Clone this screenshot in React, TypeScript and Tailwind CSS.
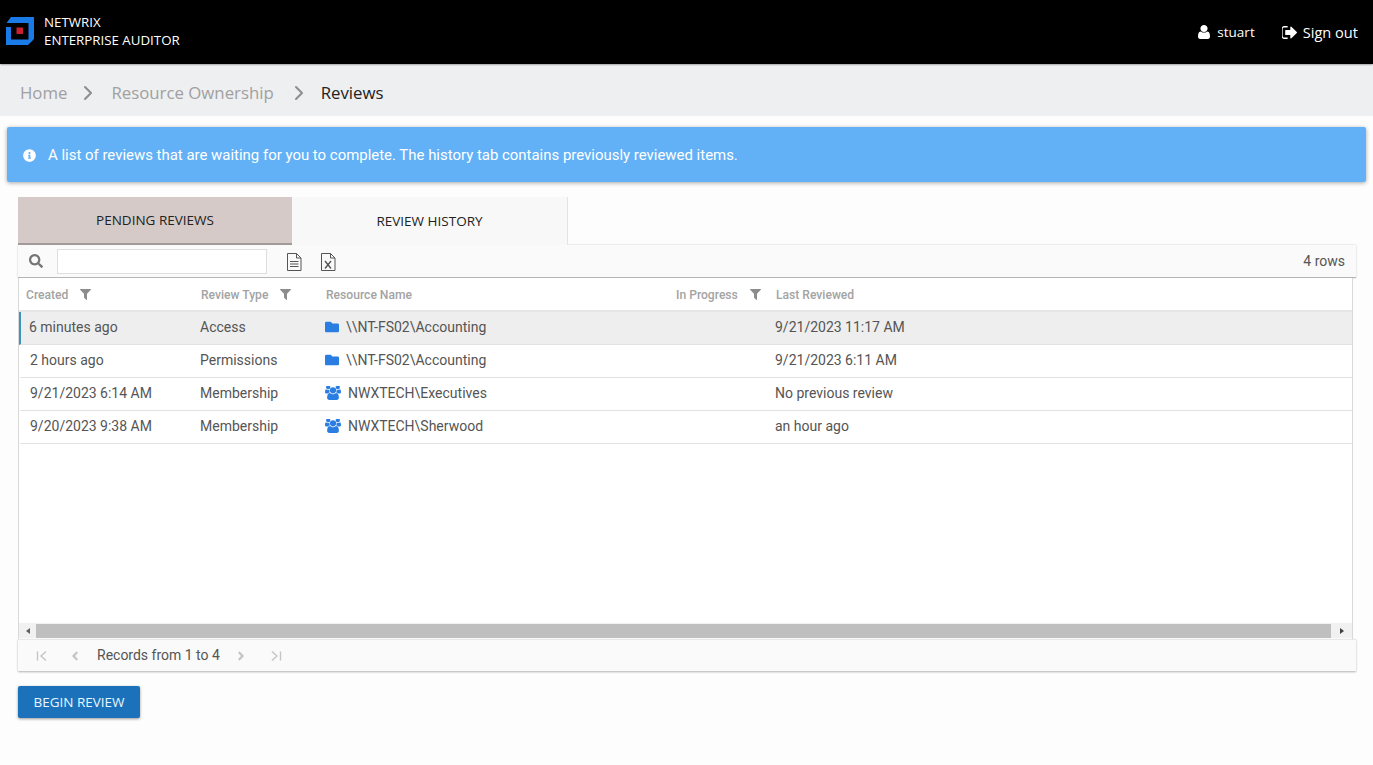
import React from 'react';
import { FaAngleLeft, FaAngleRight, FaFolder, FaInfoCircle, FaSearch } from 'react-icons/fa';
import { ChevronRight } from 'lucide-react';

const rows = [
  { created: '6 minutes ago', type: 'Access', icon: 'folder', name: '\\\\NT-FS02\\Accounting', last: '9/21/2023 11:17 AM', selected: true },
  { created: '2 hours ago', type: 'Permissions', icon: 'folder', name: '\\\\NT-FS02\\Accounting', last: '9/21/2023 6:11 AM', selected: false },
  { created: '9/21/2023 6:14 AM', type: 'Membership', icon: 'users', name: 'NWXTECH\\Executives', last: 'No previous review', selected: false },
  { created: '9/20/2023 9:38 AM', type: 'Membership', icon: 'users', name: 'NWXTECH\\Sherwood', last: 'an hour ago', selected: false },
];

const Logo = () => (
  <svg width="28" height="28" viewBox="0 0 28 28">
    <path d="M5 0H28V22L22 28H0V10H5V22.5H22.5V6H0.5Z" fill="#1a7be8" />
    <rect x="10.5" y="10.5" width="6.5" height="6.5" fill="#c8202f" />
  </svg>
);

const UserIcon = () => (
  <svg width="12" height="14" viewBox="256 128 1280 1536" fill="currentColor" preserveAspectRatio="none">
    <path d="M1536 1399q0 109-62.5 187t-150.5 78h-854q-88 0-150.5-78t-62.5-187q0-85 8.5-160.5t31.5-152 58.5-131 94-89 134.5-34.5q131 128 313 128t313-128q76 0 134.5 34.5t94 89 58.5 131 31.5 152 8.5 160.5zm-256-887q0 159-112.5 271.5t-271.5 112.5-271.5-112.5-112.5-271.5 112.5-271.5 271.5-112.5 271.5 112.5 112.5 271.5z" />
  </svg>
);

const SignOutIcon = () => (
  <svg width="15" height="13" viewBox="128 256 1504 1280" fill="currentColor">
    <path d="M704 1440q0 4 1 20t.5 26.5-3 23.5-10 19.5-20.5 6.5h-320q-119 0-203.5-84.5t-84.5-203.5v-704q0-119 84.5-203.5t203.5-84.5h320q13 0 22.5 9.5t9.5 22.5q0 4 1 20t.5 26.5-3 23.5-10 19.5-20.5 6.5h-320q-66 0-113 47t-47 113v704q0 66 47 113t113 47h312l11.5 1 11.5 3 8 5.5 7 9 2 13.5zm928-544q0 26-19 45l-544 544q-19 19-45 19t-45-19-19-45v-288h-448q-26 0-45-19t-19-45v-384q0-26 19-45t45-19h448v-288q0-26 19-45t45-19 45 19l544 544q19 19 19 45z" />
  </svg>
);

const UsersIcon = () => (
  <svg width="16" height="14" viewBox="0 128 1920 1664" fill="#2a7de1" className="mr-[7px]">
    <path d="M593 896q-162 5-265 128h-134q-82 0-138-40.5t-56-118.5q0-353 124-353 6 0 43.5 21t97.5 42.5 119 21.5q67 0 133-23-5 37-5 66 0 139 81 256zm1071 637q0 120-73 189.5t-194 69.5h-874q-121 0-194-69.5t-73-189.5q0-53 3.5-103.5t14-109 26.5-108.5 43-97.5 62-81 85.5-53.5 111.5-20q10 0 43 21.5t73 48 107 48 135 21.5 135-21.5 107-48 73-48 43-21.5q61 0 111.5 20t85.5 53.5 62 81 43 97.5 26.5 108.5 14 109 3.5 103.5zm-1024-1277q0 106-75 181t-181 75-181-75-75-181 75-181 181-75 181 75 75 181zm704 384q0 159-112.5 271.5t-271.5 112.5-271.5-112.5-112.5-271.5 112.5-271.5 271.5-112.5 271.5 112.5 112.5 271.5zm576 225q0 78-56 118.5t-138 40.5h-134q-103-123-265-128 81-117 81-256 0-29-5-66 66 23 133 23 59 0 119-21.5t97.5-42.5 43.5-21q124 0 124 353zm-128-609q0 106-75 181t-181 75-181-75-75-181 75-181 181-75 181 75 75 181z" />
  </svg>
);

const FilterIcon = ({ className }: { className: string }) => (
  <svg width="11" height="11" viewBox="192 256 1408 1408" fill="#8c8c8c" className={className}>
    <path d="M1595 295q17 41-14 70l-493 493v742q0 42-39 59-13 5-25 5-27 0-45-19l-256-256q-19-19-19-45v-486l-493-493q-31-29-14-70 17-39 59-39h1280q42 0 59 39z" />
  </svg>
);

const PlainDoc = () => (
  <svg width="16" height="18" viewBox="0 0 16 18" fill="none" stroke="#555" strokeWidth="1">
    <path d="M1.5 .5H10.5L15 5V17.5H1.5Z" />
    <path d="M10.5 .5V5H15" />
    <path d="M4 8.5H12.5M4 11H12.5M4 13.5H12.5" />
  </svg>
);

const ExcelDoc = () => (
  <svg width="16" height="18" viewBox="0 0 16 18" fill="none" stroke="#555" strokeWidth="1">
    <path d="M1.5 .5H10.5L15 5V17.5H1.5Z" />
    <path d="M10.5 .5V5H15" />
    <path d="M5 8L11 15.5M11 8L5 15.5" strokeWidth="1.4" />
  </svg>
);

const FirstIcon = () => (
  <svg width="12" height="12" viewBox="0 0 12 12" fill="none" stroke="#c4c4c4" strokeWidth="1.4">
    <path d="M1.5 1.5V10.5M10 1.5L5 6L10 10.5" />
  </svg>
);

const LastIcon = () => (
  <svg width="12" height="12" viewBox="0 0 12 12" fill="none" stroke="#c4c4c4" strokeWidth="1.4">
    <path d="M10.5 1.5V10.5M2 1.5L7 6L2 10.5" />
  </svg>
);

const App = () => {
  return (
    <div className="w-[1373px] h-[765px] overflow-hidden bg-[#fdfdfd] font-['Roboto',sans-serif]">
      <header className="h-[64px] bg-black flex items-center justify-between pl-[6px] pr-[15px] font-['Open_Sans',sans-serif] text-white shadow-[0_1px_2px_rgba(0,0,0,0.4)]">
        <div className="flex items-center gap-[10px] pb-[3px]">
          <Logo />
          <div className="text-[13.3px] leading-[18px]">
            <div>NETWRIX</div>
            <div>ENTERPRISE AUDITOR</div>
          </div>
        </div>
        <div className="flex items-center pt-[1px]">
          <UserIcon />
          <span className="ml-[7px] text-[13.5px]">stuart</span>
          <span className="ml-[27px]"><SignOutIcon /></span>
          <span className="ml-[6px] text-[14.6px]">Sign out</span>
        </div>
      </header>

      <nav className="mt-[2px] h-[50px] bg-[#eeeff1] flex items-center pl-[20px] pt-[3px] font-['Open_Sans',sans-serif] text-[16.8px]">
        <span className="text-[#a0a0a0]">Home</span>
        <ChevronRight size={24} strokeWidth={2.1} className="text-[#8f8f8f] ml-[9px] mr-[11px]" />
        <span className="text-[#a0a0a0]">Resource Ownership</span>
        <ChevronRight size={24} strokeWidth={2.1} className="text-[#8f8f8f] ml-[13px] mr-[10px]" />
        <span className="text-[#222]">Reviews</span>
      </nav>

      <div className="mt-[11px] mx-[7px] h-[55px] rounded-[2px] bg-[#62b1f6] flex items-center pl-[16px] pt-[1px] text-white text-[14.94px] shadow-[0_1px_4px_rgba(0,0,0,0.35)]">
        <FaInfoCircle className="w-[13px] h-[13px] mr-[12px]" />
        <span>A list of reviews that are waiting for you to complete. The history tab contains previously reviewed items.</span>
      </div>

      <div className="mt-[15px] ml-[18px] w-[1338px]">
        <div className="flex h-[48px] font-['Open_Sans',sans-serif] text-[13.5px] text-[#222]">
          <div className="w-[274px] pt-[1px] bg-[#d5cac7] border-b-2 border-[#a19a98] flex items-center justify-center">PENDING REVIEWS</div>
          <div className="w-[276px] pt-[1px] bg-[#f8f8f8] border-r border-[#e4e4e4] flex items-center justify-center">REVIEW HISTORY</div>
        </div>

        <div className="h-[33px] bg-[#fafafa] border-b border-[#b5b5b5] shadow-[0_0_2px_rgba(0,0,0,0.2)] flex items-center pl-[11px] pr-[11px]">
          <FaSearch className="w-[14px] h-[14px] text-[#757575]" />
          <div className="ml-[14px] w-[210px] h-[25px] bg-white border border-[#dedede]"></div>
          <div className="ml-[19px] pt-[1px]"><PlainDoc /></div>
          <div className="ml-[18px] pt-[1px]"><ExcelDoc /></div>
          <span className="ml-auto text-[14px] text-[#555]">4 rows</span>
        </div>

        <div className="w-[1335px] h-[361px] bg-white border-x border-[#d9d9d9] flex flex-col">
          <div className="h-[34px] pt-[2px] flex items-center border-b-2 border-[#e6e6e6] text-[12.1px] font-medium text-[#a3a3a3]">
            <div className="w-[181px] pl-[7px] flex items-center">
              Created
              <FilterIcon className="ml-[12px]" />
            </div>
            <div className="w-[125px] pl-[1px] flex items-center">
              Review Type
              <FilterIcon className="ml-[12px]" />
            </div>
            <div className="w-[351px] pl-[1px]">Resource Name</div>
            <div className="w-[100px] flex items-center">
              In Progress
              <FilterIcon className="ml-[12px]" />
            </div>
            <div>Last Reviewed</div>
          </div>

          {rows.map((row) => (
            <div
              key={row.created}
              className={`h-[33px] pb-[2px] flex items-center border-b border-[#e2e2e2] text-[14px] text-[#555] ${row.selected ? 'bg-[#eeeeee] border-l-2 border-l-[#3d93b8]' : 'border-l-2 border-l-transparent'}`}
            >
              <div className={row.selected ? 'w-[179px] pl-[8px]' : 'w-[179px] pl-[9px]'}>{row.created}</div>
              <div className="w-[125px]">{row.type}</div>
              <div className="w-[450px] flex items-center">
                {row.icon === 'folder' ? (
                  <FaFolder className="w-[14px] h-[14px] text-[#2a7de1] mr-[7px]" />
                ) : (
                  <UsersIcon />
                )}
                <span>{row.name}</span>
              </div>
              <div>{row.last}</div>
            </div>
          ))}

          <div className="mt-auto mb-[1px] h-[15px] bg-[#f1f1f1] flex items-center">
            <div className="w-[17px] flex justify-center">
              <div className="border-y-[3.5px] border-y-transparent border-r-[4px] border-r-[#606060]"></div>
            </div>
            <div className="flex-1 h-[14px] bg-[#bfbfbf]"></div>
            <div className="w-[21px] flex justify-center">
              <div className="border-y-[3.5px] border-y-transparent border-l-[4px] border-l-[#404040]"></div>
            </div>
          </div>
        </div>

        <div className="h-[32px] bg-[#fafafa] border-t border-[#e8e8e8] shadow-[0_1px_2px_rgba(0,0,0,0.3)] flex items-center text-[14px] text-[#555]">
          <div className="ml-[18px]"><FirstIcon /></div>
          <FaAngleLeft className="ml-[21px] w-[12px] h-[14px] text-[#c4c4c4]" />
          <span className="ml-[16px]">Records from 1 to 4</span>
          <FaAngleRight className="ml-[15px] w-[12px] h-[14px] text-[#c4c4c4]" />
          <div className="ml-[23px]"><LastIcon /></div>
        </div>

        <button className="mt-[15px] block w-[122px] h-[32px] rounded-[2px] bg-[#1b72bb] text-[#e8f6ff] text-[13.5px] font-['Open_Sans',sans-serif] shadow-[0_1px_3px_rgba(0,0,0,0.4)]">
          BEGIN REVIEW
        </button>
      </div>
    </div>
  );
};

export default App;
